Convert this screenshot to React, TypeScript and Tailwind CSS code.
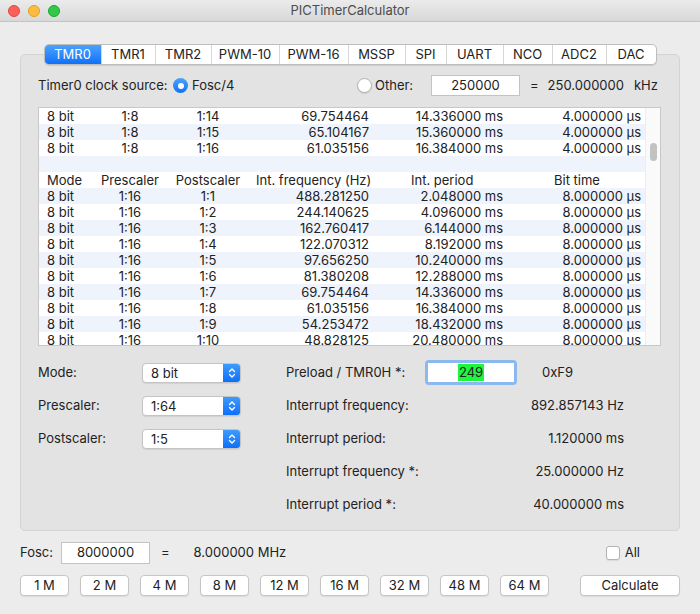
import React from "react";

type Row = { mode: string; pre: string; post: string; freq: string; period: string; bit: string };

const topRows: Row[] = [
  { mode: "8 bit", pre: "1:8", post: "1:14", freq: "69.754464", period: "14.336000 ms", bit: "4.000000 µs" },
  { mode: "8 bit", pre: "1:8", post: "1:15", freq: "65.104167", period: "15.360000 ms", bit: "4.000000 µs" },
  { mode: "8 bit", pre: "1:8", post: "1:16", freq: "61.035156", period: "16.384000 ms", bit: "4.000000 µs" },
];

const freqs = ["488.281250", "244.140625", "162.760417", "122.070312", "97.656250", "81.380208", "69.754464", "61.035156", "54.253472", "48.828125"];
const periods = ["2.048000", "4.096000", "6.144000", "8.192000", "10.240000", "12.288000", "14.336000", "16.384000", "18.432000", "20.480000"];

const bottomRows: Row[] = freqs.map((f, i) => ({
  mode: "8 bit",
  pre: "1:16",
  post: `1:${i + 1}`,
  freq: f,
  period: `${periods[i]} ms`,
  bit: "8.000000 µs",
}));

const tabs = [
  { name: "TMR0", w: "w-[56px]" },
  { name: "TMR1", w: "w-[54px]" },
  { name: "TMR2", w: "w-[56px]" },
  { name: "PWM-10", w: "w-[68px]" },
  { name: "PWM-16", w: "w-[69px]" },
  { name: "MSSP", w: "w-[57px]" },
  { name: "SPI", w: "w-[41px]" },
  { name: "UART", w: "w-[57px]" },
  { name: "NCO", w: "w-[49px]" },
  { name: "ADC2", w: "w-[54px]" },
  { name: "DAC", w: "w-[50px]" },
];

const presets = ["1 M", "2 M", "4 M", "8 M", "12 M", "16 M", "32 M", "48 M", "64 M"];

function TableRow({ r, shaded }: { r: Row; shaded: boolean }) {
  return (
    <div className={`flex h-4 items-center pl-2 leading-4 ${shaded ? "bg-[#eff4fc]" : "bg-white"}`}>
      <div className="w-[53px]">{r.mode}</div>
      <div className="w-[60px] text-center">{r.pre}</div>
      <div className="w-[96px] text-center">{r.post}</div>
      <div className="w-[113px] text-right">{r.freq}</div>
      <div className="w-[134px] text-right">{r.period}</div>
      <div className="w-[138px] text-right">{r.bit}</div>
    </div>
  );
}

function Select({ value }: { value: string }) {
  return (
    <div className="flex h-5 w-[99px] overflow-hidden rounded-[4px] border border-[#c4c4c4] bg-white shadow-[0_1px_1px_rgba(0,0,0,0.08)]">
      <div className="flex-1 pl-2 leading-[18px]">{value}</div>
      <div className="flex w-[17px] items-center justify-center bg-gradient-to-b from-[#3d9bfd] to-[#0c6ff9]">
        <svg width="8" height="12" viewBox="0 0 8 12" fill="none" stroke="white" strokeWidth="1.4" strokeLinecap="round" strokeLinejoin="round">
          <path d="M1.5 4.5 L4 2 L6.5 4.5" />
          <path d="M1.5 7.5 L4 10 L6.5 7.5" />
        </svg>
      </div>
    </div>
  );
}

function ResultRow({ label, value }: { label: string; value: string }) {
  return (
    <div className="flex h-[33px] items-center">
      <div className="flex-1">{label}</div>
      <div className="text-right">{value}</div>
    </div>
  );
}

export default function App() {
  return (
    <div className="h-[614px] w-[700px] overflow-hidden bg-[#ececec] text-[13px] text-[#222] font-['Inter','Liberation_Sans',sans-serif]">
      {/* title bar */}
      <div className="relative flex h-[22px] items-center justify-center border-b border-[#c3c3c3] bg-gradient-to-b from-[#ebebeb] to-[#d8d8d8]">
        <div className="absolute left-[8px] top-[5px] flex gap-[8px]">
          <span className="h-3 w-3 rounded-full border border-[#e2463f] bg-[#fc605b]" />
          <span className="h-3 w-3 rounded-full border border-[#e1a116] bg-[#fdbc40]" />
          <span className="h-3 w-3 rounded-full border border-[#12ac28] bg-[#34c84a]" />
        </div>
        <span className="text-[13px] text-[#4d4d4d]">PICTimerCalculator</span>
      </div>

      <div className="px-5 pt-[22px]">
        {/* tabs */}
        <div className="relative z-10 flex justify-center">
          <div className="flex h-[21px] overflow-hidden rounded-[5px] border border-[#bdbdbd] bg-white shadow-[0_1px_1px_rgba(0,0,0,0.1)]">
            {tabs.map((t, i) => (
              <div
                key={t.name}
                className={`flex items-center justify-center ${t.w} ${i > 0 ? "border-l border-[#d6d6d6]" : ""} ${
                  i === 0 ? "bg-gradient-to-b from-[#4aa2fd] to-[#0d70f8] text-white" : "text-[#222]"
                }`}
              >
                {t.name}
              </div>
            ))}
          </div>
        </div>

        {/* group box */}
        <div className="-mt-[11px] h-[477px] rounded-[5px] border border-[#d3d3d3] bg-[#e3e3e3] pl-[17px] pr-[18px] pt-[20px]">
          <div className="flex h-[21px] items-center whitespace-nowrap">
            <span className="w-[135px] shrink-0">Timer0 clock source:</span>
            <span className="flex h-[15px] w-[15px] shrink-0 items-center justify-center rounded-full bg-gradient-to-b from-[#4aa2fd] to-[#0d70f8]">
              <span className="h-[6px] w-[6px] rounded-full bg-white" />
            </span>
            <span className="ml-[4px] w-[165px] shrink-0">Fosc/4</span>
            <span className="h-[15px] w-[15px] shrink-0 rounded-full border border-[#b0b0b0] bg-white shadow-[0_1px_1px_rgba(0,0,0,0.1)]" />
            <span className="ml-[3px] w-[56px] shrink-0">Other:</span>
            <div className="flex h-[21px] w-[89px] shrink-0 items-center justify-center border border-[#c3c3c3] bg-white">250000</div>
            <span className="ml-[10px]">=</span>
            <span className="ml-[9px]">250.000000</span>
            <span className="ml-[10px]">kHz</span>
          </div>

          {/* table */}
          <div className="mt-[11px] flex h-[239px] overflow-hidden border border-[#c8c8c8] bg-white">
            <div className="flex-1 overflow-hidden">
              {topRows.map((r, i) => (
                <TableRow key={`t${i}`} r={r} shaded={i % 2 === 1} />
              ))}
              <div className="h-4 bg-[#eff4fc]" />
              <div className="flex h-4 items-center bg-white pl-2 leading-4">
                <div className="w-[53px]">Mode</div>
                <div className="w-[60px] text-center">Prescaler</div>
                <div className="w-[96px] text-center">Postscaler</div>
                <div className="w-[113px] whitespace-nowrap text-right">Int. frequency (Hz)</div>
                <div className="w-[134px] pl-[42px]">Int. period</div>
                <div className="w-[138px] pl-[51px]">Bit time</div>
              </div>
              {bottomRows.map((r, i) => (
                <TableRow key={`b${i}`} r={r} shaded={i % 2 === 0} />
              ))}
            </div>
            <div className="w-[15px] border-l border-[#ededed] bg-[#fafafa] pt-[35px]">
              <div className="mx-auto h-[18px] w-[7px] rounded-full bg-[#c2c2c2]" />
            </div>
          </div>

          {/* settings */}
          <div className="mt-[10px] flex">
            <div className="w-[248px]">
              <div className="flex h-[33px] items-center">
                <span className="w-[104px]">Mode:</span>
                <Select value="8 bit" />
              </div>
              <div className="flex h-[33px] items-center">
                <span className="w-[104px]">Prescaler:</span>
                <Select value="1:64" />
              </div>
              <div className="flex h-[33px] items-center">
                <span className="w-[104px]">Postscaler:</span>
                <Select value="1:5" />
              </div>
            </div>
            <div className="w-[338px]">
              <div className="flex h-[33px] items-center">
                <span className="w-[139px]">Preload / TMR0H *:</span>
                <div className="flex h-[25px] w-[92px] items-center justify-center rounded-[4px] bg-[#8bb8ee] p-[3px]">
                  <div className="flex h-full w-full items-center justify-center bg-white">
                    <span className="bg-[#1ff43e] px-[1px] leading-[17px]">249</span>
                  </div>
                </div>
                <span className="ml-[25px]">0xF9</span>
              </div>
              <ResultRow label="Interrupt frequency:" value="892.857143 Hz" />
              <ResultRow label="Interrupt period:" value="1.120000 ms" />
              <ResultRow label="Interrupt frequency *:" value="25.000000 Hz" />
              <ResultRow label="Interrupt period *:" value="40.000000 ms" />
            </div>
          </div>
        </div>

        {/* fosc */}
        <div className="mt-[11px] flex h-[22px] items-center">
          <span>Fosc:</span>
          <div className="ml-[8px] flex h-[22px] w-[89px] items-center justify-center border border-[#c3c3c3] bg-white">8000000</div>
          <span className="ml-[11px]">=</span>
          <span className="ml-[24px]">8.000000 MHz</span>
          <div className="ml-auto mr-[40px] flex items-center">
            <span className="h-[14px] w-[14px] rounded-[3px] border border-[#b3b3b3] bg-white shadow-[0_1px_1px_rgba(0,0,0,0.08)]" />
            <span className="ml-[5px]">All</span>
          </div>
        </div>

        <div className="mt-[11px] flex h-[21px] items-center">
          <div className="flex gap-[11px]">
            {presets.map((p) => (
              <button
                key={p}
                className="flex h-[21px] w-[49px] items-center justify-center rounded-[4px] border border-[#c6c6c6] bg-white shadow-[0_1px_1px_rgba(0,0,0,0.08)]"
              >
                {p}
              </button>
            ))}
          </div>
          <button className="ml-auto flex h-[21px] w-[100px] items-center justify-center rounded-[4px] border border-[#c6c6c6] bg-white shadow-[0_1px_1px_rgba(0,0,0,0.08)]">
            Calculate
          </button>
        </div>
      </div>
    </div>
  );
}
